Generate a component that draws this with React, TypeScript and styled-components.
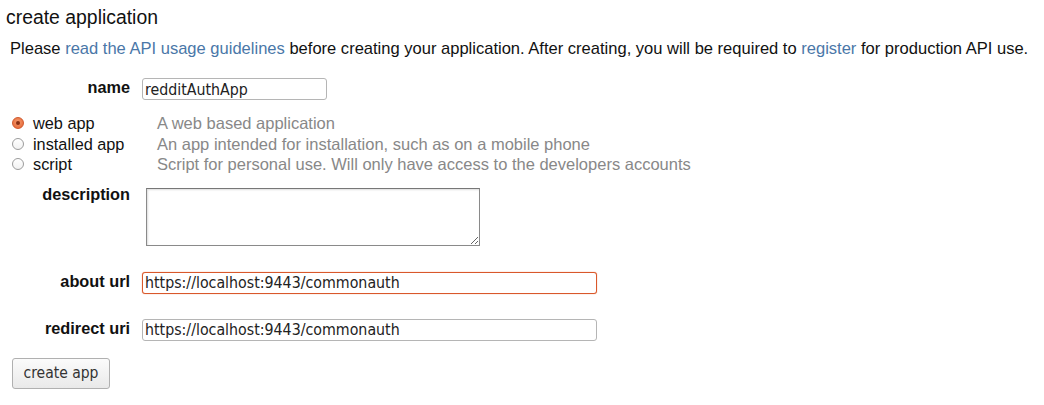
import styled, { createGlobalStyle } from "styled-components";

const GlobalStyle = createGlobalStyle`
    body {
        margin: 0;
        background: #fff;
        font-family: "Liberation Sans", Arial, sans-serif;
        color: #222;
    }
`;

const Page = styled.div`
    padding: 6px 6px 0 6px;
`;

const Title = styled.h1`
    margin: 0;
    font-size: 19.4px;
    font-weight: normal;
    line-height: 22px;
    color: #111;
`;

const Intro = styled.p`
    margin: 11px 0 0 4px;
    font-size: 16.55px;
    line-height: 20px;
    color: #111;
    white-space: nowrap;
`;

const Link = styled.a`
    color: #4a77a8;
    text-decoration: none;
`;

const Field = styled.div<{ $top: number }>`
    display: grid;
    grid-template-columns: 124px auto;
    column-gap: 12px;
    align-items: start;
    margin-top: ${(p) => p.$top}px;
`;

const Label = styled.label<{ $lift?: number }>`
    text-align: right;
    font-weight: bold;
    font-size: 16.3px;
    line-height: 20px;
    color: #111;
    margin-top: ${(p) => -(p.$lift ?? 1)}px;
`;

const TextInput = styled.input<{ $width: number; $focused?: boolean }>`
    box-sizing: border-box;
    width: ${(p) => p.$width}px;
    height: 22px;
    margin: 0;
    padding: 0 2px;
    border: 1px solid ${(p) => (p.$focused ? "#d9582b" : "#b5b5b5")};
    border-radius: 3px;
    font-family: "DejaVu Sans Condensed", "Open Sans", sans-serif;
    font-size: 15.8px;
    color: #222;
    outline: none;
    box-shadow: ${(p) => (p.$focused ? "0 0 1px #e9703e" : "none")};
`;

const TextArea = styled.textarea`
    box-sizing: border-box;
    width: 334px;
    height: 58px;
    margin: 0 0 0 4px;
    border: 1px solid #8a8a8a;
    border-top-color: #777;
    box-shadow: inset 1px 1px 2px #ddd;
    font-family: "DejaVu Sans Condensed", sans-serif;
    resize: both;
    outline: none;
`;

const Options = styled.div`
    margin: 13px 0 0 6px;
    display: grid;
    grid-template-columns: 145px auto;
`;

const Choice = styled.div`
    display: flex;
    align-items: center;
    gap: 9px;
    font-size: 16.3px;
    line-height: 20.5px;
    color: #111;
`;

const Radio = styled.span<{ $checked?: boolean }>`
    box-sizing: border-box;
    width: 12px;
    height: 12px;
    border-radius: 50%;
    display: inline-flex;
    align-items: center;
    justify-content: center;
    border: 1px solid ${(p) => (p.$checked ? "#d0582c" : "#9c9c9c")};
    background: ${(p) =>
        p.$checked
            ? "radial-gradient(circle at 50% 40%, #f59a6e, #e3612f)"
            : "linear-gradient(#fff, #f2f2f2)"};
    &::after {
        content: "";
        width: 4px;
        height: 4px;
        border-radius: 50%;
        background: ${(p) => (p.$checked ? "#8a2f12" : "transparent")};
    }
`;

const Hint = styled.div`
    font-size: 16.5px;
    line-height: 20.5px;
    color: #888;
    white-space: nowrap;
`;

const Button = styled.button`
    margin: 17px 0 0 6px;
    width: 98px;
    height: 31px;
    border: 1px solid #b0b0b0;
    border-radius: 3px;
    background: linear-gradient(#fbfbfb, #e9e9e9);
    font-family: "DejaVu Sans Condensed", sans-serif;
    font-size: 15.5px;
    color: #333;
    padding: 0;
`;

const options = [
    { label: "web app", hint: "A web based application", checked: true },
    { label: "installed app", hint: "An app intended for installation, such as on a mobile phone" },
    { label: "script", hint: "Script for personal use. Will only have access to the developers accounts" },
];

export default function App() {
    return (
        <Page>
            <GlobalStyle />
            <Title>create application</Title>
            <Intro>
                Please <Link href="#">read the API usage guidelines</Link> before creating your
                application. After creating, you will be required to <Link href="#">register</Link> for
                production API use.
            </Intro>
            <Field $top={19}>
                <Label>name</Label>
                <TextInput $width={185} defaultValue="redditAuthApp" />
            </Field>
            <Options>
                {options.map((o) => (
                    <>
                        <Choice key={o.label}>
                            <Radio $checked={o.checked} />
                            {o.label}
                        </Choice>
                        <Hint key={o.hint}>{o.hint}</Hint>
                    </>
                ))}
            </Options>
            <Field $top={13}>
                <Label $lift={4}>description</Label>
                <TextArea />
            </Field>
            <Field $top={26}>
                <Label>about url</Label>
                <TextInput $width={455} $focused defaultValue="https://localhost:9443/commonauth" />
            </Field>
            <Field $top={25}>
                <Label>redirect uri</Label>
                <TextInput $width={455} defaultValue="https://localhost:9443/commonauth" />
            </Field>
            <Button>create app</Button>
        </Page>
    );
}
